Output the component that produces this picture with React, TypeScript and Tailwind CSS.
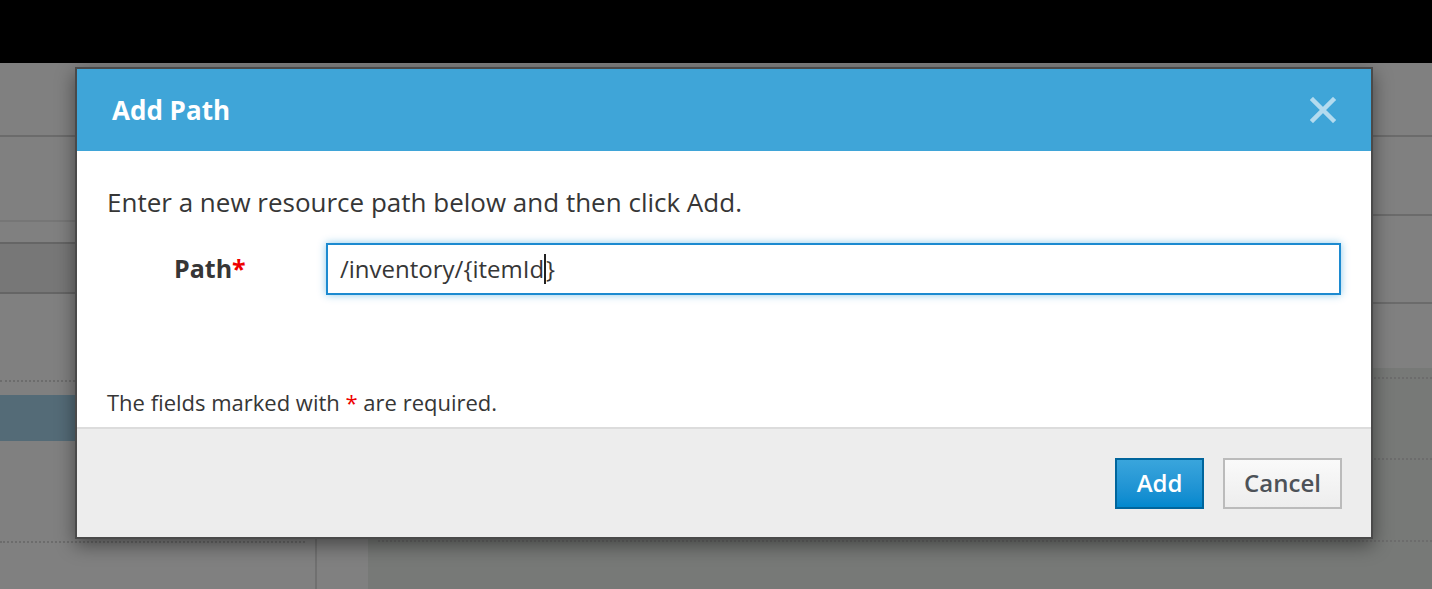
import React from 'react';

const CloseIcon: React.FC = () => (
  <svg width="26" height="26" viewBox="0 0 26 26" fill="none">
    <path d="M3 3 L23 23 M23 3 L3 23" stroke="#b3dbef" strokeWidth="4.5" strokeLinecap="square" />
  </svg>
);

const Dotted: React.FC<{ className?: string }> = ({ className = '' }) => (
  <div className={`border-t-2 border-dotted border-[#6c6c6c] ${className}`} />
);

const App: React.FC = () => {
  return (
    <div className="relative w-[1432px] h-[589px] overflow-hidden bg-[#808080] font-['Open_Sans',sans-serif]">
      {/* page behind the overlay */}
      <div className="h-[63px] bg-black" />
      <div className="h-[74px] border-b-2 border-[#6b6b6b]" />
      <div className="flex h-[452px]">
        <div className="w-[317px] border-r-2 border-[#707070] flex flex-col">
          <div className="h-[85px] border-b-2 border-[#767676]" />
          <div className="h-[22px] border-b-2 border-[#656565]" />
          <div className="h-[50px] bg-[#777777] border-b-2 border-[#656565]" />
          <div className="h-[86px]" />
          <Dotted />
          <div className="h-[13px]" />
          <div className="h-[46px] bg-[#546b77]" />
          <div className="h-[100px]" />
          <Dotted className="mr-[10px]" />
        </div>
        <div className="flex-1 flex flex-col">
          <div className="h-[79px] border-b-2 border-[#6b6b6b]" />
          <div className="h-[88px] border-b-2 border-[#6b6b6b]" />
          <div className="h-[64px]" />
          <div className="flex-1 ml-[51px] bg-[#777977] flex flex-col">
            <div className="h-[9px]" />
            <Dotted className="ml-[10px]" />
            <div className="h-[79px]" />
            <Dotted className="ml-[10px]" />
            <div className="h-[80px]" />
            <Dotted className="ml-[10px]" />
          </div>
        </div>
      </div>

      {/* modal */}
      <div className="absolute left-[75px] top-[67px] w-[1298px] border-2 border-[#4a4a4a] shadow-[0_6px_18px_rgba(0,0,0,0.45)] bg-white">
        <div className="h-[82px] bg-[#3fa5d8] flex items-center justify-between pl-[35px] pr-[35px]">
          <h2 className="text-[26px] leading-[36px] font-bold text-white">Add Path</h2>
          <CloseIcon />
        </div>
        <div className="px-[30px] pt-[33px] pb-[10px] text-[#363636]">
          <p className="text-[26px] leading-[36px]">Enter a new resource path below and then click Add.</p>
          <div className="flex items-center mt-[23px]">
            <label className="w-[219px] pl-[67px] text-[25px] font-bold">
              Path<span className="text-[#e00]">*</span>
            </label>
            <div className="flex-1 h-[52px] border-2 border-[#1c8ad0] shadow-[0_0_8px_rgba(0,136,206,0.45)] flex items-center px-[12px] text-[24px] text-[#363636]">
              <span>/inventory/{'{'}itemId</span>
              <span className="inline-block w-[2px] h-[30px] bg-[#222]" />
              <span>{'}'}</span>
            </div>
          </div>
          <p className="mt-[92px] text-[22px] leading-[30px]">
            The fields marked with <span className="text-[#e00]">*</span> are required.
          </p>
        </div>
        <div className="border-t-2 border-[#dcdcdc] bg-[#ededed] h-[110px] flex items-center justify-end gap-[19px] pr-[29px]">
          <button className="w-[89px] h-[51px] border-2 border-[#00659c] bg-gradient-to-b from-[#39a5dc] to-[#0088ce] text-white text-[24px] font-semibold">
            Add
          </button>
          <button className="w-[119px] h-[51px] border-2 border-[#bbbbbb] bg-gradient-to-b from-[#fafafa] to-[#ededed] text-[#4d5258] text-[24px] font-semibold">
            Cancel
          </button>
        </div>
      </div>
    </div>
  );
};

export default App;
